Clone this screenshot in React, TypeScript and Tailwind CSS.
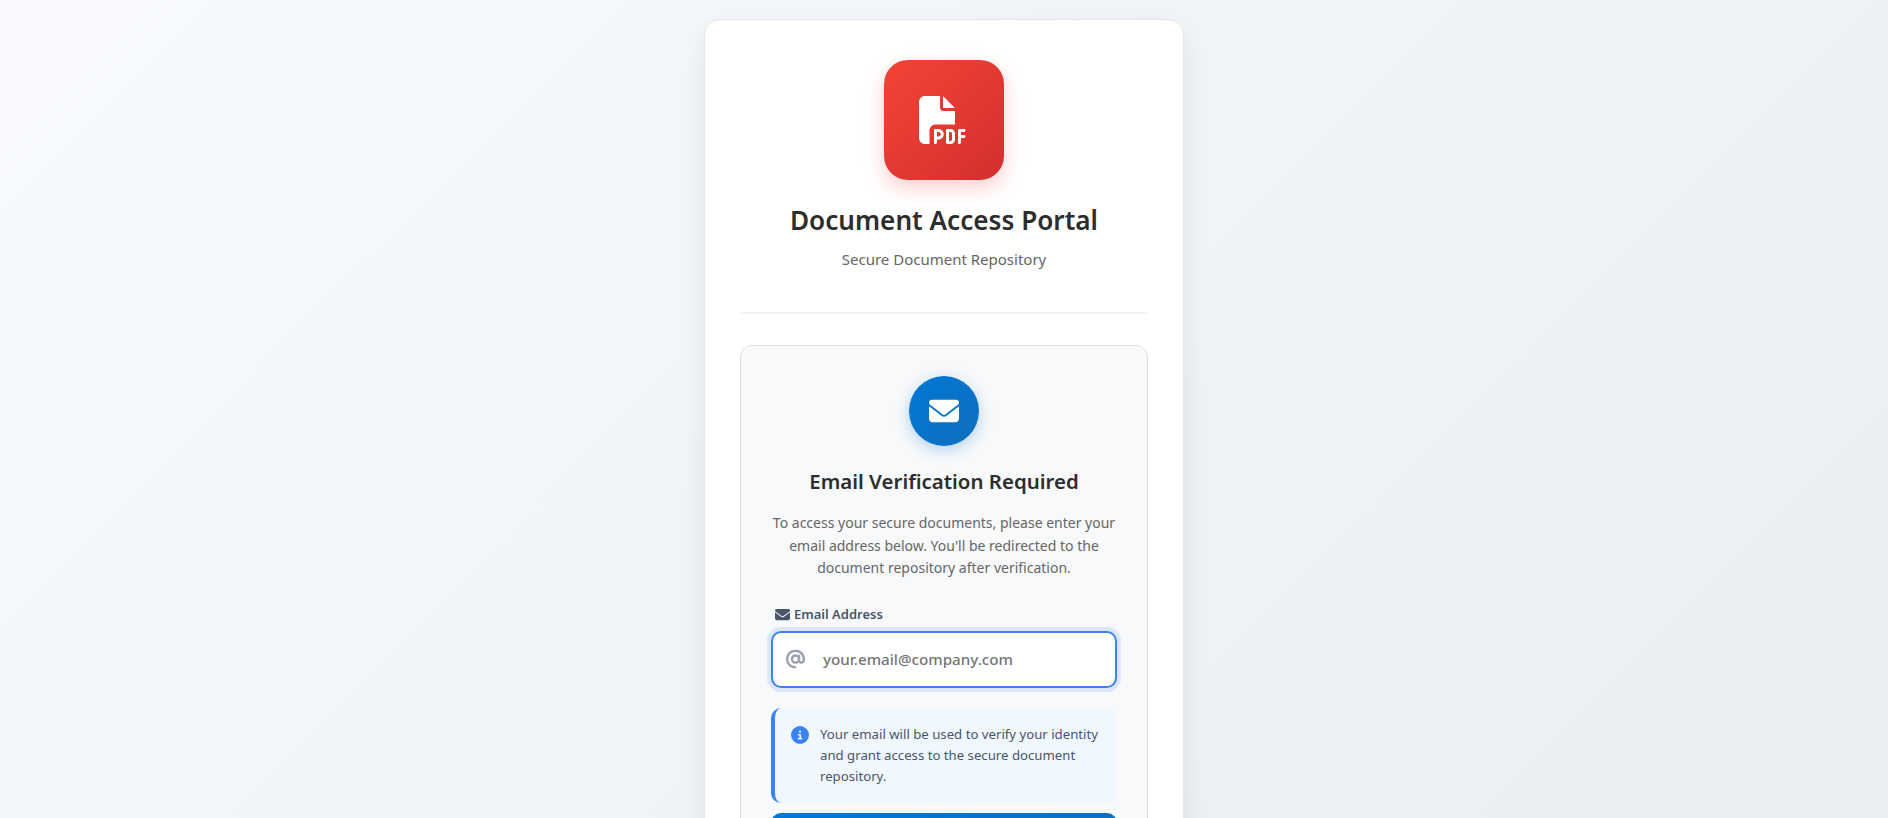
import { FaAt, FaCircleInfo, FaEnvelope, FaFilePdf } from 'react-icons/fa6';

export default function App() {
  return (
    <div className="h-screen overflow-hidden bg-linear-[135deg] from-[#f8faff] to-[#eaedf1] font-['Noto_Sans',sans-serif] text-[#2d2d2d]">
      <div className="mx-auto mt-[19px] w-[480px] rounded-2xl border border-[#e5e7eb] bg-white px-[35px] pt-10 pb-8 shadow-[0_10px_30px_rgba(0,0,0,0.08)]">
        <div className="flex flex-col items-center border-b-2 border-[#f2f2f4] pb-[42px]">
          <div className="flex h-[120px] w-[120px] items-center justify-center rounded-3xl bg-linear-[135deg] from-[#f44336] to-[#d32f2f] text-white shadow-[0_8px_20px_rgba(244,67,54,0.25)]">
            <FaFilePdf size={48} className="-ml-0.5" />
          </div>
          <h1 className="mt-[19px] text-[26.15px] leading-[42px] font-semibold">Document Access Portal</h1>
          <p className="mt-[7px] text-[15px] leading-[22px] text-[#666]">Secure Document Repository</p>
        </div>

        <div className="mt-[31px] rounded-xl border border-[#e0e0e0] bg-[#f8f9fa] px-[30px] pt-[30px] pb-6">
          <div className="flex flex-col items-center text-center">
            <div className="flex h-[70px] w-[70px] items-center justify-center rounded-full bg-linear-[135deg] from-[#0078d4] to-[#106ebe] text-white shadow-[0_4px_15px_rgba(0,120,212,0.3)]">
              <FaEnvelope size={30} />
            </div>
            <h2 className="mt-[19px] text-[20.45px] leading-[33px] font-semibold">Email Verification Required</h2>
            <p className="mt-[14px] text-sm leading-[22.5px] text-[#666]">
              To access your secure documents, please enter your email address below. You'll be redirected to the document repository after verification.
            </p>
          </div>

          <label className="mt-6 flex items-center gap-1 pl-1 text-[13px] leading-[21px] font-semibold text-[#4a5568]">
            <FaEnvelope size={15} />
            Email Address
          </label>
          <div className="relative mt-1.5">
            <FaAt size={19} className="absolute top-1/2 left-[15px] -translate-y-1/2 text-[#9ca3af]" />
            <input
              readOnly
              placeholder="your.email@company.com"
              className="h-[57px] w-full rounded-[10px] border-2 border-[#3b82f6] bg-white pr-4 pl-[50px] text-[15.2px] font-medium shadow-[0_0_0_4px_rgba(59,130,246,0.15)] outline-none placeholder:text-[#757575]"
            />
          </div>

          <div className="mt-5 flex gap-3 rounded-[10px] border-l-4 border-[#3b82f6] bg-[#f0f7ff] py-4 pr-[15px] pl-4">
            <FaCircleInfo size={18} className="mt-[2px] shrink-0 text-[#3b82f6]" />
            <p className="-ml-px text-[13.2px] leading-[21px] text-[#4a5568]">
              Your email will be used to verify your identity and grant access to the secure document repository.
            </p>
          </div>

          <button className="mt-[10px] h-[54px] w-full rounded-[10px] bg-linear-[135deg] from-[#0078d4] to-[#106ebe]" aria-label="Continue" />
        </div>
      </div>
    </div>
  );
}
